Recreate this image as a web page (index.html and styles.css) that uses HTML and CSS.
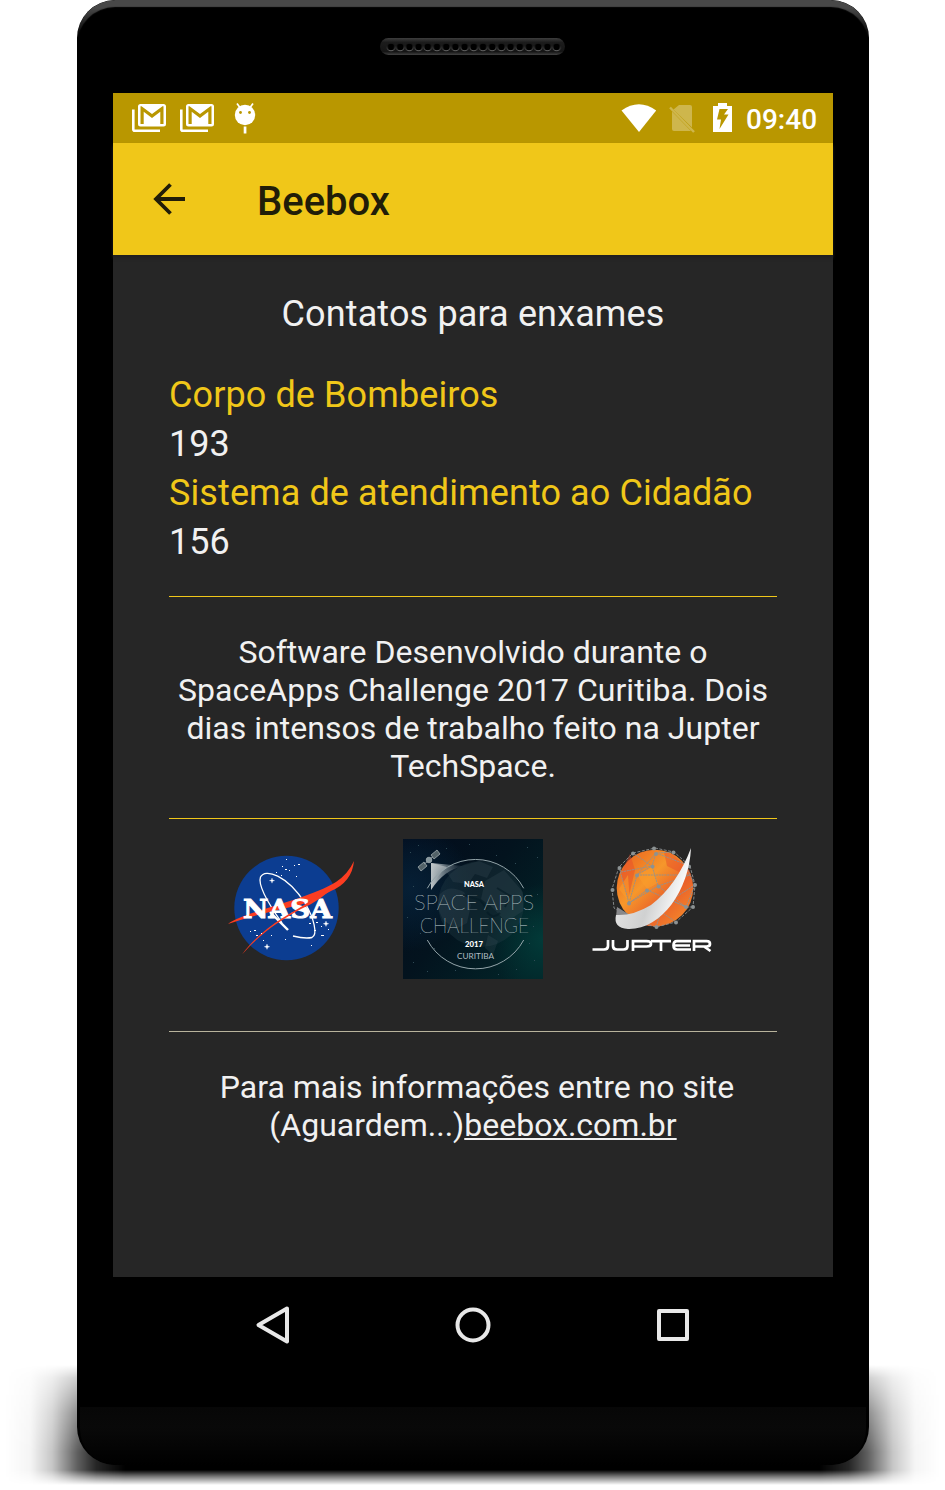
FILE: index.html
```html
<!DOCTYPE html>
<html lang="pt-BR">
<head>
<meta charset="utf-8">
<title>Beebox</title>
<link rel="stylesheet" href="styles.css">
</head>
<body>
<div class="stage">
  <div class="ground-shadow"></div>
  <div class="phone">
    <div class="speaker">
      <svg width="185" height="17" viewBox="0 0 185 17">
        <defs>
          <linearGradient id="spk" x1="0" y1="0" x2="0" y2="1"><stop offset="0" stop-color="#3d3d3d"/><stop offset=".25" stop-color="#1c1c1c"/><stop offset=".8" stop-color="#151515"/><stop offset="1" stop-color="#424242"/></linearGradient>
          <linearGradient id="rim" x1="0" y1="0" x2="0" y2="1"><stop offset=".3" stop-color="#191919"/><stop offset="1" stop-color="#666"/></linearGradient>
          <pattern id="holes" x="6.4" y="4" width="9.2" height="11" patternUnits="userSpaceOnUse"><circle cx="4.6" cy="5" r="3.8" fill="#000" stroke="url(#rim)"/></pattern>
        </defs>
        <rect width="185" height="17" rx="8.5" fill="url(#spk)"/>
        <rect x="6.4" y="4" width="174.8" height="11" fill="url(#holes)"/>
      </svg>
    </div>

    <div class="screen">
      <div class="status">
        <svg class="status-left" width="160" height="50" viewBox="0 0 160 50">
          <g id="mail">
            <path d="M20.300 16.500V36.200Q20.300 37.700 21.800 37.700H47" fill="none" stroke="#fff" stroke-width="2.600"/>
            <path fill="#fff" fill-rule="evenodd" d="M27.500 11H50.500Q53 11 53 13.500V31Q53 33.500 50.500 33.500H27.500Q25 33.500 25 31V13.500Q25 11 27.500 11ZM27.500 13.300V31H30.700V18.800L39 25L47.300 18.800V31H50.500V13.300H49.500L39 21L28.500 13.300Z"/>
          </g>
          <use href="#mail" x="48"/>
          <circle cx="132" cy="22" r="10.200" fill="#fff"/>
          <path d="M124 10.500L128 16M140 10.500L136 16" stroke="#fff" stroke-width="1.700"/>
          <circle cx="127.500" cy="19.500" r="1.400" fill="#b99700"/><circle cx="136.500" cy="19.500" r="1.400" fill="#b99700"/>
          <path d="M130.700 33.500h2.700v7h-2.700z" fill="#fff"/>
        </svg>
        <svg class="status-right" width="120" height="50" viewBox="0 0 120 50">
          <path d="M8.500 17.500Q26 5 43.200 17.500L26 39Z" fill="#fff"/>
          <g fill="#ceb64c"><path d="M66 12H77Q79 12 79 14V34.500L60.500 16.500ZM59 18.500L78 38H61Q59 38 59 36Z"/><path d="M57 14.500L81 39" stroke="#ceb64c" stroke-width="2.400"/></g>
          <path fill="#fff" fill-rule="evenodd" d="M105 10h9v3h5v26h-19V13h5ZM106.500 16L104 26.500H108L106.500 36L115.500 21.500H111L115 16Z"/>
        </svg>
        <span class="clock">09:40</span>
      </div>
      <div class="appbar">
        <svg class="back" width="34" height="34" viewBox="0 0 34 34"><path d="M18.500 2.500L4 17L18.500 31.500M4 17H33" fill="none" stroke="#211d08" stroke-width="3.800"/></svg>
        <span class="app-title">Beebox</span>
      </div>
      <main class="content">
        <h1 class="heading">Contatos para enxames</h1>
        <dl class="contacts">
          <dt>Corpo de Bombeiros</dt><dd>193</dd>
          <dt>Sistema de atendimento ao Cidadão</dt><dd>156</dd>
        </dl>
        <div class="rule"></div>
        <p class="about">Software Desenvolvido durante o<br>SpaceApps Challenge 2017 Curitiba. Dois<br>dias intensos de trabalho feito na Jupter<br>TechSpace.</p>
        <div class="rule"></div>
        <div class="logos">
          <svg width="140" height="140" viewBox="0 0 140 140">
            <circle cx="65.500" cy="69" r="52.200" fill="#0c3d91"/>
            <path d="M61 84C44 60 37 45 39.500 38C44 29 66 36 84 64C93 79 97 96 91 98.500Q84 100 72 97" fill="none" stroke="#fff" stroke-width="1.300"/>
            <path d="M7 85C25 72 86 61 115 43Q127 35 133 22Q131 43 110 52Q94 61 79 66Q40 74 7 85Z" fill="#fc3d21"/>
            <text x="22" y="78.500" textLength="89" lengthAdjust="spacingAndGlyphs" class="nasa-word">NASA</text>
            <path d="M49 73L67 91" stroke="#fff" stroke-width="2.400"/>
            <path d="M21 115.500C42 87 68 76 86 64Q103 53 118 43Q101 61 80 70C58 82 40 94 21 115.500Z" fill="#fc3d21"/>
            <g fill="#fff"><path d="M65 20h1v1h-1zM73 26h1v1h-1zM77 25h2v1h-2zM64 30h2v1h-2zM55 33h1v1h-1zM61 27h1v1h-1zM75 37h1v1h-1zM29 92h1v1h-1zM33 91h2v1h-2zM35 96h2v1h-2zM40 94h1v1h-1zM42 101h1v1h-1zM50 96h1v1h-1zM64 100h1v1h-1zM90 106h1v1h-1zM88 84h2v1h-2zM93 91h2v1h-2zM100 87h1v1h-1zM107 90h1v1h-1zM100 96h3v1h-3zM60 36h1v1h-1zM68 31h1v1h-1zM95 83h2v1h-2z"/><path d="M51 39l.6 2 2 .6-2 .6-.6 2-.6-2-2-.6 2-.6zM105 82l.7 2 2 .7-2 .7-.7 2-.7-2-2-.7 2-.7zM46 105l.7 2 2 .7-2 .7-.7 2-.7-2-2-.7 2-.7z" stroke="#fff" stroke-width=".3"/></g>
          </svg>
          <svg width="140" height="140" viewBox="0 0 140 140">
            <defs>
              <linearGradient id="sky" x1="0" y1="0" x2="1" y2=".8"><stop offset="0" stop-color="#020c1c"/><stop offset=".5" stop-color="#03131e"/><stop offset="1" stop-color="#022428"/></linearGradient>
              <radialGradient id="nebula" cx="1" cy=".72" r=".4"><stop offset="0" stop-color="#023a38"/><stop offset="1" stop-color="#023a38" stop-opacity="0"/></radialGradient>
              <radialGradient id="bluehaze" cx=".05" cy=".35" r=".45"><stop offset="0" stop-color="#061f35"/><stop offset="1" stop-color="#06263f" stop-opacity="0"/></radialGradient>
              <linearGradient id="beam"><stop offset="0" stop-color="#c4cacc"/><stop offset="1" stop-color="#83949c" stop-opacity="0"/></linearGradient>
              <linearGradient id="beamfade" x1="0" y1="0" x2="0" y2="1"><stop offset="0" stop-color="#c4cacc"/><stop offset="1" stop-color="#83949c" stop-opacity="0"/></linearGradient>
            </defs>
            <rect width="140" height="140" fill="url(#sky)"/><rect width="140" height="140" fill="url(#nebula)"/><rect width="140" height="140" fill="url(#bluehaze)"/>
            <circle cx="78" cy="65" r="43" fill="#263e48" opacity=".35"/>
            <path d="M58 27L76 22L90 28L84 39L72 35L65 45L50 43L43 32ZM37 55Q46 45 61 53L68 66L64 84L53 90L40 81L34 67ZM82 42L101 31L120 53V72L103 83L89 68L78 60ZM85 96l10 6-5 14-8-7z" fill="#4b6068" opacity=".2"/>
            <path d="M84 73q6 8 13 1M60 56l17 5 7 9M94 49l13 8-5 11" fill="none" stroke="#051a24" stroke-width="2" opacity=".6"/>
            <path d="M28 24L60 27Q41 31 28 51Z" fill="url(#beam)"/>
            <path d="M28 24L44 28Q33 37 28 51Z" fill="url(#beamfade)" opacity=".7"/>
            <path d="M24.300 49.300A54.700 54.700 0 0 1 120.700 49.300M24.300 101A54.700 54.700 0 0 0 120.700 101" fill="none" stroke="#94a5aa" stroke-width="1"/>
            <g fill="#536268" stroke="#a0abae" stroke-width=".8"><path d="M28 16l6-5 3 4-6 5zM15 28l6-5 3 4-6 5z"/><circle cx="26" cy="21" r="2.800" fill="#87979d"/><path d="M21 25l3-2M28 19l2-1"/></g>
            <g fill="#2f4b56"><path d="M15 6h1v1h-1zM43 9h1v1h-1zM66 5h1v1h-1zM93 16h1v1h-1zM124 8h1v1h-1zM134 18h1v1h-1zM112 24h1v1h-1zM7 13h1v1h-1zM10 47h1v1h-1zM4 78h1v1h-1zM17 94h1v1h-1zM10 123h1v1h-1zM24 132h1v1h-1zM52 131h1v1h-1zM113 130h1v1h-1zM131 121h1v1h-1zM130 87h1v1h-1zM126 104h1v1h-1zM31 109h1v1h-1zM134 55h1v1h-1zM95 135h1v1h-1z"/></g>
            <g class="badge-text">
              <text x="61" y="47.500" textLength="20" lengthAdjust="spacingAndGlyphs" class="badge-bold">NASA</text>
              <text x="11" y="71" textLength="120" lengthAdjust="spacingAndGlyphs" class="badge-large">SPACE APPS</text>
              <text x="17" y="94" textLength="109" lengthAdjust="spacingAndGlyphs" class="badge-large">CHALLENGE</text>
              <text x="62" y="107.500" textLength="18" lengthAdjust="spacingAndGlyphs" class="badge-bold">2017</text>
              <text x="54" y="119.500" textLength="37" lengthAdjust="spacingAndGlyphs" class="badge-small">CURITIBA</text>
            </g>
          </svg>
          <svg width="140" height="140" viewBox="0 0 140 140">
            <defs>
              <linearGradient id="planet" x1="0" y1="0" x2="1" y2="1"><stop offset="0" stop-color="#e56225"/><stop offset=".22" stop-color="#f07b24"/><stop offset=".4" stop-color="#f6972b"/><stop offset=".65" stop-color="#e9602a"/><stop offset="1" stop-color="#f8952a"/></linearGradient>
              <linearGradient id="swoosh" x1="0" y1="0" x2="1" y2=".35"><stop offset="0" stop-color="#ddd"/><stop offset=".15" stop-color="#e6e6e6"/><stop offset=".6" stop-color="#d0d1d1"/><stop offset="1" stop-color="#fff"/></linearGradient>
            </defs>
            <circle cx="70" cy="49" r="38.300" fill="url(#planet)"/>
            <path d="M36 34L45 15L50 31L43 61ZM79 13L88 15L105 32L98 35L82 27Z" fill="#e84e29" opacity=".5"/>
            <path d="M52 36L67 28L73 44L62 50ZM34 50L43 36L45 64Z" fill="#fa9d2c" opacity=".6"/>
            <g fill="none" stroke="#8d9293" stroke-width=".9"><path d="M48 14L70 9L89 13L105 27L110 46L108 68L91 83L71 88L45 80L29 69L27 50L34 28Z" stroke-dasharray="3 1.500"/><path d="M34 28L44 64L52 36L71 14L67 27L52 36L105 36L73 47L44 64L62 51L101 68L73 47L67 27L36 33ZM48 14L67 27M89 13L71 14L105 27M110 46L86 61L101 68L108 68M86 61L76 73L91 83M76 73L71 88M101 68L110 46L101 28" stroke-dasharray="2 .7"/></g>
            <g fill="#8c9293"><circle cx="48" cy="14.500" r="2"/><circle cx="69" cy="9.500" r="2"/><circle cx="71" cy="15" r="2"/><circle cx="88.500" cy="13.500" r="2"/><circle cx="104" cy="27.500" r="2"/><circle cx="110" cy="46" r="2"/><circle cx="108" cy="68" r="2"/><circle cx="101" cy="68" r="2"/><circle cx="91" cy="83.500" r="2"/><circle cx="71.500" cy="88" r="2"/><circle cx="34.500" cy="29" r="2"/><circle cx="27.500" cy="51" r="2"/><circle cx="44" cy="64.500" r="2"/><circle cx="52" cy="36.500" r="2"/><circle cx="67.500" cy="27.500" r="2"/><circle cx="73.500" cy="47.500" r="2"/><circle cx="62" cy="51.500" r="2"/><circle cx="86" cy="61.500" r="2"/></g>
            <path d="M32 68L45 76L31 78Z" fill="#89898b"/>
            <path d="M106 9C104 52 76 91 43 90Q28 89 31 76Q48 77 66 66Q92 46 106 9Z" fill="url(#swoosh)"/>
            <!-- wordmark with open, squared letterforms -->
            <g fill="none" stroke="#fff" stroke-width="2.700"><path d="M7.500 110.500H19Q23 110.500 23 107V101M28 101V107Q28 110.500 32 110.500H38.500Q42.500 110.500 42.500 107V101M48 112V102.200H61.500Q66 102.200 66 105Q66 107.500 61.500 107.500H48M66 102.200H86M76 102V112M106 102.200H92Q88.500 102.200 88.500 106.500Q88.500 110.500 92 110.500H106M89 106.500H105M109 112V102.200H121.500Q125 102.200 125 105Q125 107.500 121.500 107.500H110M119 107.500L125.500 112"/></g>
          </svg>
        </div>
        <div class="rule pale"></div>
        <p class="site">&nbsp;Para mais informações entre no site<br>(Aguardem...)<a>beebox.com.br</a></p>
      </main>
    </div>

    <nav class="navbar">
      <svg width="440" height="48" viewBox="0 0 440 48"><g fill="none" stroke="#e8e8e8" stroke-width="4" stroke-linejoin="round"><path d="M34 7.500L5.500 24L34 40.500Z"/><circle cx="220" cy="24" r="15.500"/><path d="M406 10h28v28h-28z"/></g></svg>
    </nav>
    <div class="chin"></div>
  </div>
</div>
</body>
</html>
```
FILE: styles.css
```css
* { box-sizing: border-box; }
body { margin: 0; background: #fff; font-family: Roboto, sans-serif; }
.stage { position: relative; width: 945px; height: 1490px; padding: 0 76px 0 77px; overflow: hidden; }
.ground-shadow {
  position: absolute; left: 0; top: 1362px; width: 945px; height: 123px;
  background: linear-gradient(to right, transparent 5px, rgba(0,0,0,.04) 30px, rgba(0,0,0,.22) 52px, rgba(0,0,0,.62) 77px, rgba(0,0,0,.85) 96px, #000 125px, #000 820px, rgba(0,0,0,.85) 849px, rgba(0,0,0,.62) 868px, rgba(0,0,0,.22) 893px, rgba(0,0,0,.04) 915px, transparent 940px);
  -webkit-mask-image: linear-gradient(to bottom, transparent 3px, rgba(0,0,0,.3) 16px, rgba(0,0,0,.7) 50px, #000 90px, #000 108px, rgba(0,0,0,.5) 115px, transparent 123px);
  mask-image: linear-gradient(to bottom, transparent 3px, rgba(0,0,0,.3) 16px, rgba(0,0,0,.7) 50px, #000 90px, #000 108px, rgba(0,0,0,.5) 115px, transparent 123px);
}
.phone {
  position: relative; width: 792px; height: 1465px; padding: 0 36px;
  display: flex; flex-direction: column; overflow: hidden;
  border-radius: 38px; background: #000;
}
.phone::before {
  content: ""; position: absolute; inset: 0; border-radius: 38px;
  box-shadow: inset 0 7px 1px 0 #484848;
  -webkit-mask-image: linear-gradient(to bottom, #000 8px, transparent 38px);
  mask-image: linear-gradient(to bottom, #000 8px, transparent 38px);
}
.speaker { height: 93px; padding: 38px 2px 0 0; display: flex; justify-content: center; align-items: flex-start; flex: none; }
.screen { height: 1184px; background: #262626; flex: none; }
.status { height: 50px; display: flex; align-items: center; background: #b99700; color: #fff; }
.status-right { margin-left: 340px; }
.clock { margin-left: 13px; padding-top: 3px; font-size: 28px; font-weight: 500; line-height: 34px; }
.appbar { height: 112px; padding: 4px 0 0 39px; display: flex; align-items: center; background: #f0c719; color: #211d08; box-shadow: 0 3px 3px #202020; }
.back { margin-top: -4px; }
.app-title { margin: 2px 0 0 71px; font-size: 40px; font-weight: 500; line-height: 48px; }
.content { padding: 38px 56px 0; color: #f1f1f1; }
.heading { margin: 0; text-align: center; font-size: 36px; font-weight: 400; line-height: 42px; letter-spacing: .14px; }
.contacts { margin: 36px 0 29px; font-size: 36px; line-height: 49px; }
.contacts dt { color: #f0c719; letter-spacing: .1px; }
.contacts dd { margin: 0; }
.rule { height: 1px; background: #f0c719; }
.about { margin: 36px -10px 33px; text-align: center; font-size: 32px; line-height: 38px; letter-spacing: .03px; }
.logos { display: flex; justify-content: center; gap: 42px; padding: 20px 0 52px; }
.pale { background: #b8b39c; }
.site { margin: 36px -10px 0; text-align: center; font-size: 32px; line-height: 38px; }
.site a { text-decoration: underline; text-decoration-thickness: 2px; text-underline-offset: 2px; }
.nasa-word { font: 700 26px "DejaVu Serif", serif; fill: #fff; stroke: #fff; stroke-width: .9px; }
.badge-text { font-family: Lato, sans-serif; fill: #b1bdc1; }
.badge-bold { font-size: 8px; font-weight: 900; fill: #fff; }
.badge-large { font-size: 21px; font-weight: 100; fill: #a9b8bc; stroke: #a9b8bc; stroke-width: .2px; }
.badge-small { font-size: 8px; }
.navbar { height: 130px; padding-top: 24px; display: flex; justify-content: center; align-items: flex-start; flex: none; }
.chin { height: 58px; margin: 0 -33px; background: linear-gradient(#070707, #090909 35%, #000); border-radius: 0 0 36px 36px; flex: none; }
```
